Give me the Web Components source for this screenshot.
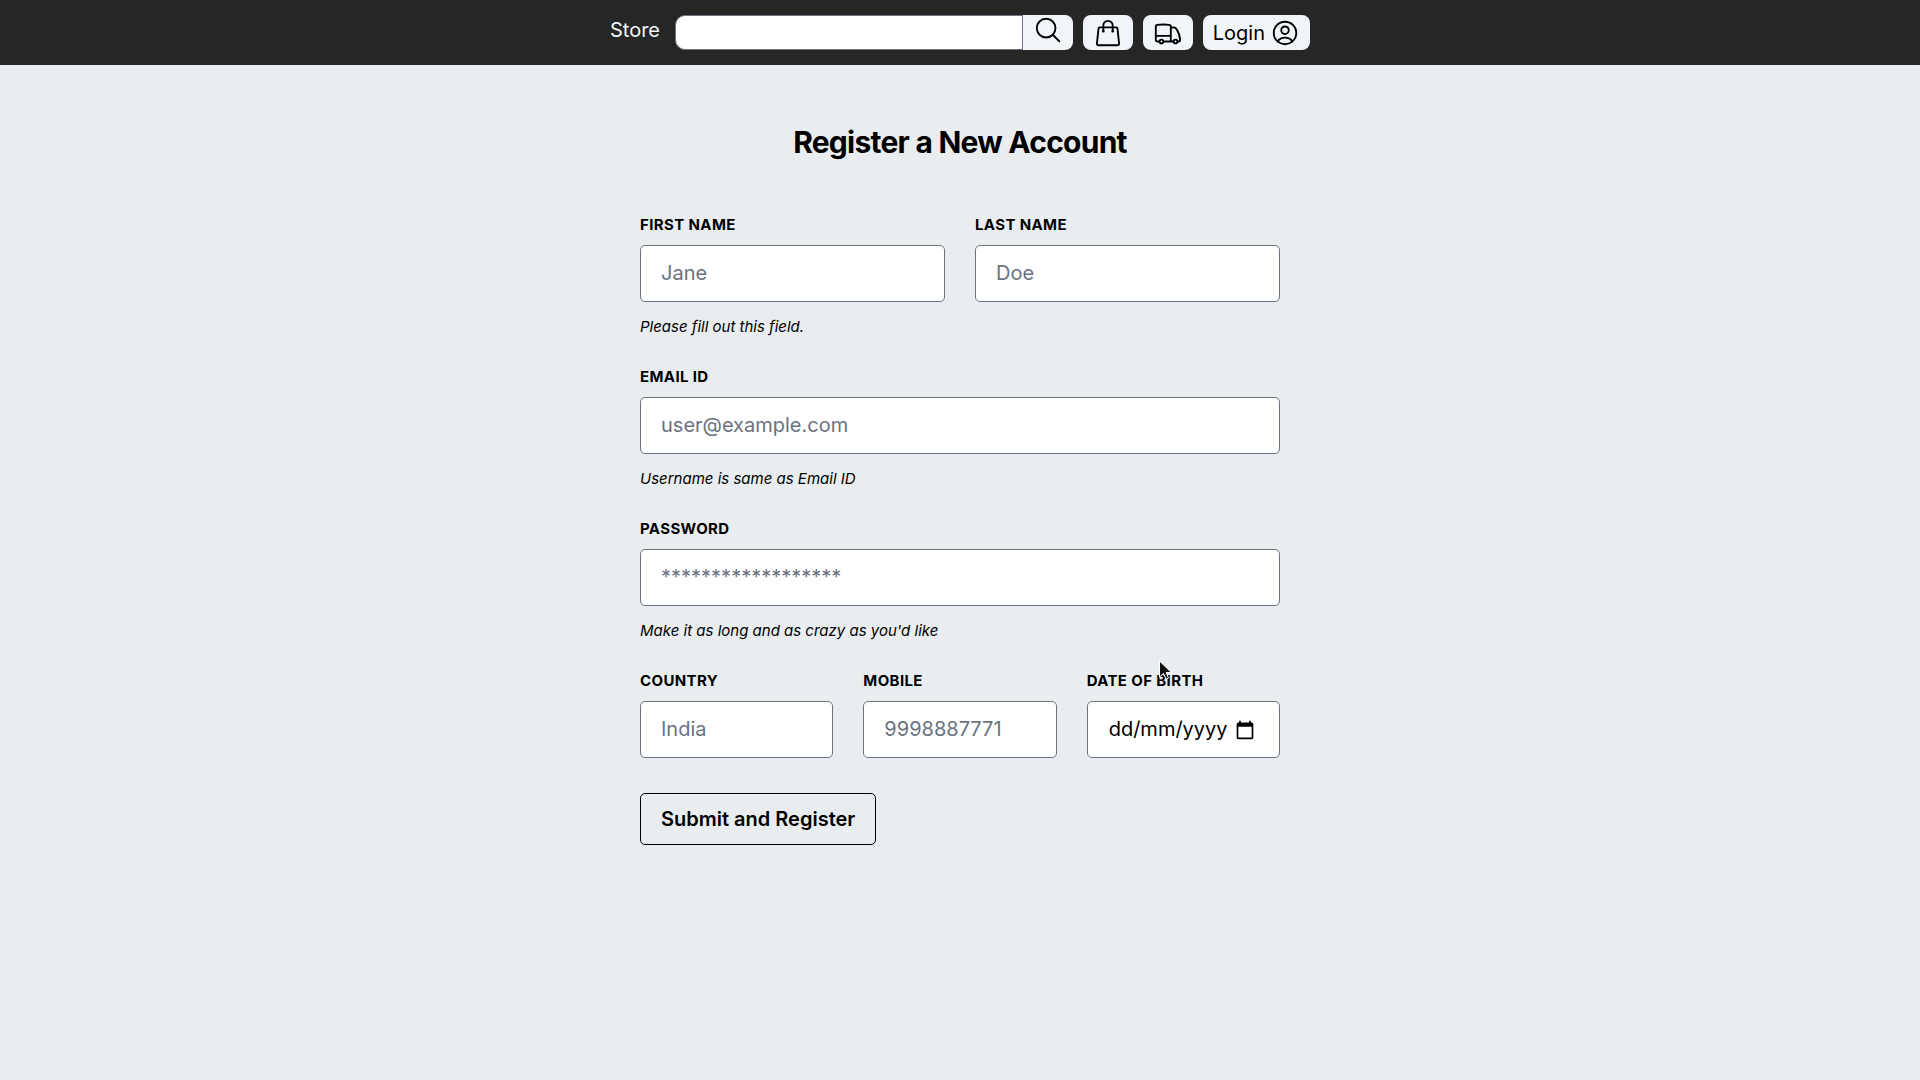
<!DOCTYPE html>
<html lang="en">
<head>
<meta charset="utf-8">
<meta name="viewport" content="width=device-width, initial-scale=1">
<title>Store</title>
<style>
  html {
    --surface: #f1f5f9;
    --ink: #000;
    --muted: #6b7280;
    font-family: Inter, "Liberation Sans", sans-serif;
    font-size: 20px;
    line-height: 30px;
    color: var(--ink);
    background: #e9edef;
  }
  body { margin: 0; }
</style>
</head>
<body>
<store-app></store-app>

<template id="t-app">
  <style>
    :host { display: block; }
    main { padding: 57px 20px 60px; }
    h1 { margin: 0 0 53px; font-size: 30px; line-height: 40px; font-weight: 700; letter-spacing: -0.025em; text-align: center; }
  </style>
  <store-header></store-header>
  <main>
    <h1>Register a New Account</h1>
    <register-form></register-form>
  </main>
  <mouse-pointer></mouse-pointer>
</template>

<template id="t-header">
  <style>
    :host { display: block; background: #262626; padding: 15px 20px; }
    nav { display: flex; align-items: flex-start; gap: 10px; max-width: 700px; margin: 0 auto; }
    .brand { color: var(--surface); text-decoration: none; margin-right: 5px; }
    form { display: flex; flex: 1; }
    input {
      box-sizing: border-box; flex: 1; min-width: 0; height: 35px; margin: 0; padding: 0 10px;
      font: inherit; background: #fff; border: 1px solid var(--muted); border-radius: 10px 0 0 10px; outline: none;
    }
  </style>
  <nav aria-label="Main">
    <a class="brand" href="#">Store</a>
    <form role="search">
      <input type="search" aria-label="Search the store">
      <nav-button name="Search" class="joined"><svg viewBox="0 0 24 24"><path d="M21 21l-5.197-5.197m0 0A7.5 7.5 0 105.196 5.196a7.5 7.5 0 0010.607 10.607z"/></svg></nav-button>
    </form>
    <nav-button name="Bag"><svg viewBox="0 0 24 24"><path d="M15.75 10.5V6a3.75 3.75 0 10-7.5 0v4.5m11.356-1.993l1.263 12c.07.665-.45 1.243-1.119 1.243H4.25a1.125 1.125 0 01-1.12-1.243l1.264-12A1.125 1.125 0 015.513 7.5h12.974c.576 0 1.059.435 1.119 1.007zM8.625 10.5a.375.375 0 11-.75 0 .375.375 0 01.75 0zm7.5 0a.375.375 0 11-.75 0 .375.375 0 01.75 0z"/></svg></nav-button>
    <nav-button name="Orders"><svg viewBox="0 0 24 24"><path d="M8.25 18.75a1.5 1.5 0 01-3 0m3 0a1.5 1.5 0 00-3 0m3 0h6m-9 0H3.375a1.125 1.125 0 01-1.125-1.125V14.25m17.25 4.5a1.5 1.5 0 01-3 0m3 0a1.5 1.5 0 00-3 0m3 0h1.125c.621 0 1.129-.504 1.09-1.124a17.902 17.902 0 00-3.213-9.193 2.056 2.056 0 00-1.58-.86H14.25M16.5 18.75h-2.25m0-11.177v-.958c0-.568-.422-1.048-.987-1.106a48.554 48.554 0 00-10.026 0 1.106 1.106 0 00-.987 1.106v7.635m12-6.677v6.677m0 4.5v-4.5m0 0h-12"/></svg></nav-button>
    <nav-button name="Login"><span>Login</span><svg viewBox="0 0 24 24"><path d="M17.982 18.725A7.488 7.488 0 0012 15.75a7.488 7.488 0 00-5.982 2.975m11.963 0a9 9 0 10-11.963 0m11.963 0A8.966 8.966 0 0112 21a8.966 8.966 0 01-5.982-2.275M15 9.75a3 3 0 11-6 0 3 3 0 016 0z"/></svg></nav-button>
  </nav>
</template>

<template id="t-nav-button">
  <style>
    :host { display: block; }
    button {
      display: flex; align-items: center; gap: 5px; height: 35px; padding: 0 10px; border: 0; border-radius: 8px;
      background: var(--surface); color: inherit; font: inherit; cursor: pointer;
    }
    :host(.joined) button { align-items: flex-start; border-radius: 0 8px 8px 0; }
    ::slotted(svg) { display: block; width: 30px; height: 30px; fill: none; stroke: currentColor; stroke-width: 1.5; stroke-linecap: round; stroke-linejoin: round; }
  </style>
  <button type="button"><slot></slot></button>
</template>

<template id="t-form">
  <style>
    :host { display: block; max-width: 640px; margin: 0 auto; }
    form { display: grid; grid-template-columns: minmax(0, 1fr); gap: 30px; }
    .row { display: flex; align-items: flex-start; gap: 30px; }
    .row > * { flex: 1 1 0; min-width: 0; }
    button {
      justify-self: start; margin-top: 5px; padding: 10px 20px; border: 1px solid var(--ink); border-radius: 5px;
      background: transparent; color: inherit; font: inherit; font-weight: 600; cursor: pointer;
    }
  </style>
  <form>
    <div class="row">
      <form-field label="First Name" placeholder="Jane">Please fill out this field.</form-field>
      <form-field label="Last Name" placeholder="Doe"></form-field>
    </div>
    <form-field label="Email ID" type="email" placeholder="user@example.com">Username is same as Email ID</form-field>
    <form-field label="Password" type="password" placeholder="******************">Make it as long and as crazy as you'd like</form-field>
    <div class="row">
      <form-field label="Country" placeholder="India"></form-field>
      <form-field label="Mobile" type="tel" placeholder="9998887771"></form-field>
      <date-field label="Date of Birth" placeholder="dd/mm/yyyy"></date-field>
    </div>
    <button type="submit">Submit and Register</button>
  </form>
</template>

<template id="t-field">
  <style>
    :host { display: block; }
    label { display: block; margin-bottom: 10px; font-size: 15px; line-height: 20px; font-weight: 700; letter-spacing: 0.025em; text-transform: uppercase; }
    .box { display: flex; align-items: center; padding: 0 20px; background: #fff; border: 1px solid var(--muted); border-radius: 5px; }
    input { flex: 1; min-width: 0; margin: 0; padding: 15px 0; border: 0; background: none; outline: none; color: inherit; font: inherit; line-height: 25px; height: 25px; }
    input::placeholder { color: var(--muted); opacity: 1; }
    p { margin: 15px 0 0; font-size: 15px; line-height: 20px; font-style: italic; }
    p[hidden], .pick[hidden] { display: none; }
    .pick { display: block; flex: none; padding: 0 4px; border: 0; background: none; color: inherit; cursor: pointer; }
    .pick svg { display: block; width: 20px; height: 20px; }
    :host(date-field) input { padding-left: 1px; }
    :host(date-field) input::placeholder { color: var(--ink); }
  </style>
  <label for="control"></label>
  <div class="box">
    <input id="control">
    <button class="pick" type="button" aria-label="Open calendar" hidden>
      <svg viewBox="0 0 24 24"><path d="M20 3h-1V1h-2v2H7V1H5v2H4c-1.100 0-2 .9-2 2v16c0 1.100.9 2 2 2h16c1.100 0 2-.9 2-2V5c0-1.100-.9-2-2-2zm0 18H4V8h16v13z" fill="currentColor"/></svg>
    </button>
  </div>
  <p hidden><slot></slot></p>
</template>

<template id="t-pointer">
  <style>
    :host { position: absolute; left: 1159px; top: 660px; pointer-events: none; }
    svg { display: block; width: 14px; height: 20px; }
  </style>
  <svg viewBox="0 0 14 20" aria-hidden="true"><path d="M.5 1V17L4.500 13.500L7 19L9.500 18L7.200 12.500H12.500Z" fill="#111" stroke="#fff"/></svg>
</template>

<script>
  class BaseElement extends HTMLElement {
    constructor() {
      super();
      this.attachShadow({ mode: 'open' }).append(
        document.getElementById(this.constructor.template).content.cloneNode(true)
      );
    }
  }

  class MousePointer extends BaseElement { static template = 't-pointer'; }

  class NavButton extends BaseElement {
    static template = 't-nav-button';
    connectedCallback() {
      this.shadowRoot.querySelector('button').setAttribute('aria-label', this.getAttribute('name'));
    }
  }

  class FormField extends BaseElement {
    static template = 't-field';
    connectedCallback() {
      const root = this.shadowRoot;
      const input = root.querySelector('input');
      root.querySelector('label').textContent = this.getAttribute('label');
      input.type = this.getAttribute('type') || 'text';
      input.placeholder = this.getAttribute('placeholder') || '';
      root.querySelector('p').hidden = !this.textContent.trim();
    }
  }

  class DateField extends FormField {
    connectedCallback() {
      super.connectedCallback();
      this.shadowRoot.querySelector('.pick').hidden = false;
      this.shadowRoot.querySelector('input').inputMode = 'numeric';
    }
  }

  class RegisterForm extends BaseElement {
    static template = 't-form';
    connectedCallback() {
      this.shadowRoot.querySelector('form').addEventListener('submit', e => e.preventDefault());
    }
  }

  class StoreHeader extends BaseElement { static template = 't-header'; }
  class StoreApp extends BaseElement { static template = 't-app'; }

  customElements.define('mouse-pointer', MousePointer);
  customElements.define('nav-button', NavButton);
  customElements.define('form-field', FormField);
  customElements.define('date-field', DateField);
  customElements.define('register-form', RegisterForm);
  customElements.define('store-header', StoreHeader);
  customElements.define('store-app', StoreApp);
</script>
</body>
</html>
